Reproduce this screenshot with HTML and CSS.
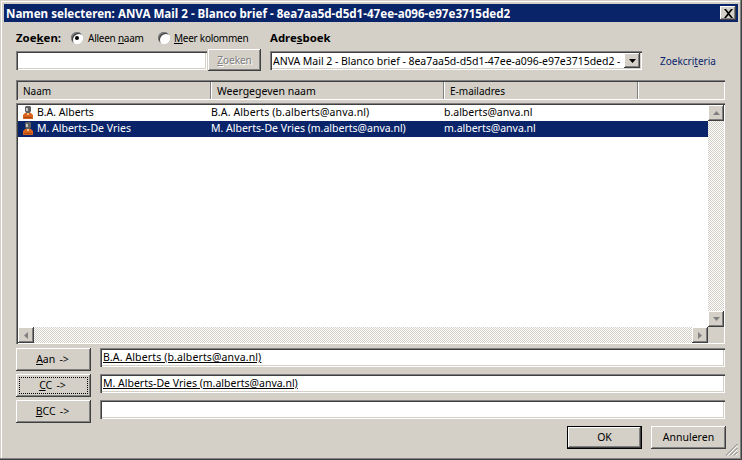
FILE: index.html
```html
<!DOCTYPE html>
<html lang="nl">
<head>
<meta charset="utf-8">
<title>Namen selecteren</title>
<link rel="stylesheet" href="styles.css">
</head>
<body>
<div class="window">
  <div class="titlebar">
    <span class="title">Namen selecteren: ANVA Mail 2 - Blanco brief - 8ea7aa5d-d5d1-47ee-a096-e97e3715ded2</span>
    <button class="bevel close"><svg width="9" height="9" viewBox="0 0 9 9"><path d="M0 0h2l2.500 3 2.500-3h2l-3.500 4.500 3.500 4.500h-2l-2.500-3-2.500 3h-2l3.500-4.500z" fill="#000"/></svg></button>
  </div>
  <div class="content">
    <div class="labels">
      <span class="bold zoeken-label">Zoe<u>k</u>en:</span>
      <span class="radio on"></span><span class="radio-text first">Alleen <u>n</u>aam</span>
      <span class="radio"></span><span class="radio-text second"><u>M</u>eer kolommen</span>
      <span class="bold adres-label">Adre<u>s</u>boek</span>
    </div>
    <div class="controls">
      <div class="field search-input"></div>
      <div class="bevel search-btn"><span><u>Z</u>oeken</span></div>
      <div class="field combo">
        <span class="combo-text">ANVA Mail 2 - Blanco brief - 8ea7aa5d-d5d1-47ee-a096-e97e3715ded2 -</span>
        <span class="bevel combo-btn"><svg width="7" height="4" viewBox="0 0 7 4"><path d="M0 0h7l-3.500 4z" fill="#000"/></svg></span>
      </div>
      <span class="link">Zoekcri<u>t</u>eria</span>
    </div>
    <div class="header">
      <div class="col c1 tight">Naam</div>
      <div class="col c2">Weergegeven naam</div>
      <div class="col c3 tight">E-mailadres</div>
      <div class="col c4"></div>
    </div>
    <div class="list">
      <div class="list-main">
        <div class="rows">
          <div class="row">
            <div class="cell c1 name"><svg class="person" width="10" height="13" viewBox="0 0 10 13"><path d="M3 0h4l1 1v4l-1 2h-4l-1-2v-4z" fill="#5f5f5f"/><path d="M3 2h2v3h-2z" fill="#c4c4c4"/><path d="M2 7h6l2 2v4h-10v-4z" fill="#d9641c"/><path d="M4 7h2v2h-2z" fill="#f6c08a"/><path d="M1 11h8v1h-8z" fill="#a8480f"/></svg>B.A. Alberts</div>
            <div class="cell c2 wide">B.A. Alberts (b.alberts@anva.nl)</div>
            <div class="cell c3">b.alberts@anva.nl</div>
          </div>
          <div class="row selected">
            <div class="cell c1 name"><svg class="person" width="10" height="13" viewBox="0 0 10 13"><path d="M3 0h4l1 1v4l-1 2h-4l-1-2v-4z" fill="#5f5f5f"/><path d="M3 2h2v3h-2z" fill="#c4c4c4"/><path d="M2 7h6l2 2v4h-10v-4z" fill="#d9641c"/><path d="M4 7h2v2h-2z" fill="#f6c08a"/><path d="M1 11h8v1h-8z" fill="#a8480f"/></svg>M. Alberts-De Vries</div>
            <div class="cell c2">M. Alberts-De Vries (m.alberts@anva.nl)</div>
            <div class="cell c3">m.alberts@anva.nl</div>
          </div>
        </div>
        <div class="hscroll">
          <span class="bevel arrow"><svg width="4" height="7" viewBox="0 0 4 7"><path d="M4 0v7l-4-3.500z" fill="#808080"/></svg></span>
          <span class="track"></span>
          <span class="bevel arrow"><svg width="4" height="7" viewBox="0 0 4 7"><path d="M0 0v7l4-3.500z" fill="#808080"/></svg></span>
        </div>
      </div>
      <div class="vscroll">
        <span class="bevel arrow"><svg width="7" height="4" viewBox="0 0 7 4"><path d="M0 4h7l-3.500-4z" fill="#808080"/></svg></span>
        <span class="track"></span>
        <span class="bevel arrow"><svg width="7" height="4" viewBox="0 0 7 4"><path d="M0 0h7l-3.500 4z" fill="#808080"/></svg></span>
        <span class="corner"></span>
      </div>
    </div>
    <div class="recipients">
      <div class="bevel rbtn"><span><u>A</u>an -&gt;</span></div>
      <div class="field rfield wide"><u>B.A. Alberts (b.alberts@anva.nl)</u></div>
      <div class="bevel rbtn focus"><span><u>C</u>C -&gt;</span></div>
      <div class="field rfield"><u>M. Alberts-De Vries (m.alberts@anva.nl)</u></div>
      <div class="bevel rbtn"><span><u>B</u>CC -&gt;</span></div>
      <div class="field rfield"></div>
    </div>
    <div class="footer">
      <div class="bevel fbtn default"><span>OK</span></div>
      <div class="bevel fbtn"><span>Annuleren</span></div>
    </div>
  </div>
  <svg class="grip" width="13" height="13" viewBox="0 0 13 13"><path d="M12.500 1l-11.500 11.500M12.500 5l-7.500 7.500M12.500 9l-3.500 3.500" stroke="#808080" fill="none"/><path d="M12.500 2.500l-10 10M12.500 6.500l-6 6M12.500 10.500l-2 2" stroke="#fff" fill="none"/></svg>
</div>
</body>
</html>
```
FILE: styles.css
```css
* { box-sizing: border-box; }
html, body { margin: 0; padding: 0; }
body {
  width: 742px;
  height: 460px;
  overflow: hidden;
  font-family: "Noto Sans", "Liberation Sans", sans-serif;
  font-size: 10.5px;
  color: #000;
  background: #d4d0c8;
}
u { text-decoration: underline; text-underline-offset: 1px; }
.wide { letter-spacing: .13px; }
.tight { font-size: 10px; }
.window {
  position: relative;
  width: 742px;
  height: 460px;
  padding: 4px 0 0;
  display: flex;
  flex-direction: column;
  background: #d4d0c8;
  box-shadow: inset -1px -1px 0 #404040, inset -2px -2px 0 #808080, inset 1px 1px 0 #d4d0c8, inset 2px 2px 0 #fff;
}
.titlebar {
  height: 18px;
  margin: 0 4px;
  padding: 0 2px;
  display: flex;
  align-items: center;
  justify-content: space-between;
  background: #0a246a;
  color: #fff;
  font-weight: 700;
  font-size: 11.6px;
}
.title { white-space: nowrap; }
.bevel {
  background: #d4d0c8;
  box-shadow: inset -1px -1px 0 #404040, inset 1px 1px 0 #fff, inset -2px -2px 0 #808080, inset 2px 2px 0 #d4d0c8;
  display: flex;
  align-items: center;
  justify-content: center;
}
.field {
  background: #fff;
  box-shadow: inset 1px 1px 0 #808080, inset 2px 2px 0 #404040, inset -1px -1px 0 #fff, inset -2px -2px 0 #d4d0c8;
}
.close {
  width: 16px;
  height: 14px;
  padding: 0;
  border: 0;
}
.content {
  flex: 1;
  padding: 9px 17px 0 16px;
  display: flex;
  flex-direction: column;
}
.labels {
  height: 18px;
  display: flex;
  align-items: flex-start;
  white-space: nowrap;
  line-height: 14px;
}
.bold { font-weight: 700; font-size: 11.4px; }
.zoeken-label { width: 55px; }
.radio {
  width: 12px;
  height: 12px;
  margin-top: 1px;
  border-radius: 50%;
  background: #fff;
  box-shadow: inset 1px 1px 0 #808080, inset -1px -1px 0 #fff, inset 2px 2px 0 #404040;
  display: flex;
  align-items: center;
  justify-content: center;
}
.radio.on::after {
  content: "";
  width: 4px;
  height: 4px;
  border-radius: 50%;
  background: #000;
}
.radio-text { font-size: 10px; letter-spacing: -.25px; }
.radio-text.first { width: 70px; margin-left: 5px; }
.radio-text.second { width: 96px; margin-left: 4px; }
.controls {
  height: 22px;
  display: flex;
  align-items: flex-start;
  white-space: nowrap;
}
.search-input {
  width: 191px;
  height: 19px;
  margin-top: 2px;
}
.search-btn {
  width: 53px;
  height: 22px;
  margin-left: 1px;
  font-size: 10px;
  color: #808080;
  text-shadow: 1px 1px 0 #fff;
}
.combo {
  width: 372px;
  height: 19px;
  margin: 2px 0 0 9px;
  padding: 2px 2px 2px 3px;
  display: flex;
  align-items: center;
  justify-content: space-between;
}
.combo-text { overflow: hidden; letter-spacing: -.03px; }
.combo-btn { width: 16px; height: 15px; flex: none; }
.link {
  margin: 5px 0 0 18px;
  font-size: 10px;
  color: #0a246a;
}
.header {
  height: 20px;
  margin-top: 9px;
  display: flex;
  background: #d4d0c8;
  box-shadow: inset 1px 1px 0 #808080, inset 2px 2px 0 #404040, inset -1px -1px 0 #fff;
  padding: 2px 0 1px 2px;
}
.col {
  height: 17px;
  padding: 2px 0 0 5px;
  line-height: 14px;
  box-shadow: inset -1px 0 0 #fff, inset -2px 0 0 #808080;
}
.col.c1 { width: 194px; }
.col.c2 { width: 233px; }
.col.c3 { width: 194px; }
.col.c4 { flex: 1; box-shadow: none; }
.list {
  height: 241px;
  margin-top: 3px;
  padding: 2px 1px 1px 2px;
  display: flex;
  background: #fff;
  box-shadow: inset 1px 1px 0 #808080, inset 2px 2px 0 #404040, inset -1px -1px 0 #fff, inset -2px -2px 0 #d4d0c8;
}
.list-main {
  flex: 1;
  display: flex;
  flex-direction: column;
  min-width: 0;
}
.rows { flex: 1; }
.row {
  height: 16px;
  display: flex;
  line-height: 14px;
  white-space: nowrap;
}
.row.selected { background: #0a246a; color: #fff; }
.cell.c1 { width: 193px; padding-left: 5px; display: flex; align-items: flex-start; }
.cell.c2 { width: 233px; }
.person { margin: 1px 4px 0 0; flex: none; }
.hscroll {
  height: 16px;
  display: flex;
}
.arrow { width: 16px; height: 16px; flex: none; }
.track {
  flex: 1;
  background: repeating-conic-gradient(#d4d0c8 0 25%, #fff 0 50%) 0 0 / 2px 2px;
}
.vscroll {
  width: 16px;
  display: flex;
  flex-direction: column;
}
.corner { height: 16px; background: #d4d0c8; flex: none; }
.recipients {
  margin-top: 4px;
  display: grid;
  grid-template-columns: 75px 1fr;
  column-gap: 9px;
  row-gap: 3px;
  grid-auto-rows: 23px;
}
.rbtn { height: 23px; padding: 0 2px 2px 0; word-spacing: 1.500px; }
.rbtn.focus { position: relative; }
.rbtn.focus::after {
  content: "";
  position: absolute;
  inset: 3px;
  border: 1px dotted #000;
}
.rfield {
  height: 19px;
  padding: 1px 3px;
  line-height: 16px;
  white-space: nowrap;
}
.footer {
  margin: 3px -1px 0 0;
  display: flex;
  justify-content: flex-end;
  gap: 9px;
}
.fbtn { width: 75px; height: 23px; padding-bottom: 2px; }
.fbtn.default {
  outline: 1px solid #000;
  outline-offset: -1px;
  box-shadow: inset -2px -2px 0 #404040, inset 2px 2px 0 #fff, inset -3px -3px 0 #808080;
}
.grip { position: absolute; right: 4px; bottom: 4px; }
```
